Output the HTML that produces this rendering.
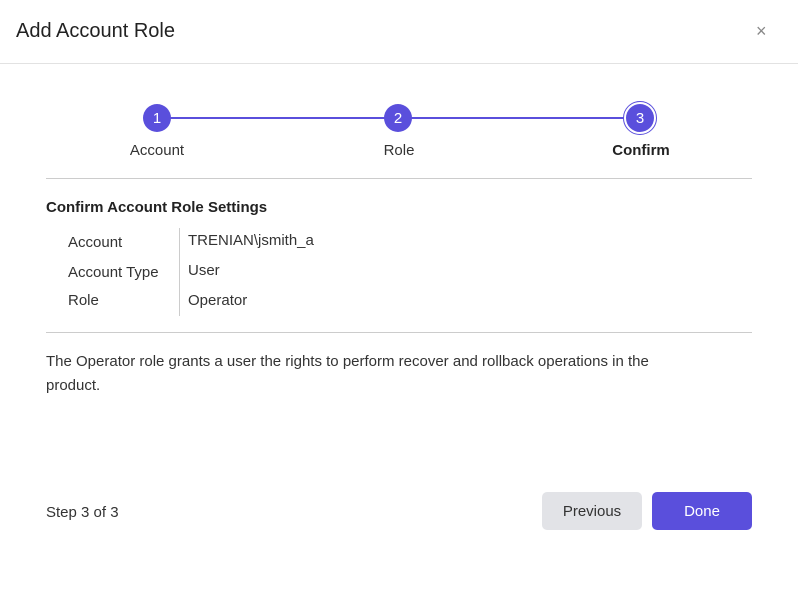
<!DOCTYPE html>
<html><head><style>
body{margin:0;width:798px;height:598px;background:#fff;font-family:"Liberation Sans",sans-serif;color:#222;position:relative;overflow:hidden}
.a{position:absolute}
.c{position:absolute;width:28px;height:28px;border-radius:50%;background:#5a4fdc;color:#fff;font-size:15px;display:flex;align-items:center;justify-content:center}
.lbl{position:absolute;font-size:15px;color:#333;transform:translateX(-50%);white-space:nowrap}
.t{position:absolute;font-size:15px;color:#333}
.b{position:absolute;top:492px;width:100px;height:38px;border-radius:5px;font-size:15px;display:flex;align-items:center;justify-content:center}
</style></head><body>
<div class="a" style="left:16px;top:20px;font-size:20px;color:#222">Add Account Role</div>
<div class="a" style="left:756px;top:21px;font-size:18px;color:#888">×</div>
<div class="a" style="left:0;top:63px;width:798px;height:1px;background:#e2e2e2"></div>
<div class="a" style="left:157px;top:117px;width:484px;height:2px;background:#5a4fdc"></div>
<div class="c" style="left:143px;top:104px">1</div>
<div class="c" style="left:384px;top:104px">2</div>
<div class="a" style="left:623px;top:101px;width:34px;height:34px;border-radius:50%;border:1.5px solid #5a4fdc;box-sizing:border-box;background:#fff"></div>
<div class="c" style="left:626px;top:104px">3</div>
<div class="lbl" style="left:157px;top:142px">Account</div>
<div class="lbl" style="left:399px;top:142px">Role</div>
<div class="lbl" style="left:641px;top:142px;font-weight:bold;color:#222">Confirm</div>
<div class="a" style="left:46px;top:178px;width:706px;height:1px;background:#ccc"></div>
<div class="t" style="left:46px;top:199px;font-weight:bold;color:#222">Confirm Account Role Settings</div>
<div class="a" style="left:179px;top:228px;width:1px;height:88px;background:#ccc"></div>
<div class="t" style="left:68px;top:234px">Account</div>
<div class="t" style="left:68px;top:264px">Account Type</div>
<div class="t" style="left:68px;top:292px">Role</div>
<div class="t" style="left:188px;top:232px">TRENIAN\jsmith_a</div>
<div class="t" style="left:188px;top:262px">User</div>
<div class="t" style="left:188px;top:292px">Operator</div>
<div class="a" style="left:46px;top:332px;width:706px;height:1px;background:#ccc"></div>
<div class="t" style="left:46px;top:350px;width:650px;line-height:24px">The Operator role grants a user the rights to perform recover and rollback operations in the product.</div>
<div class="t" style="left:46px;top:504px">Step 3 of 3</div>
<div class="b" style="left:542px;background:#e2e3e7;color:#333">Previous</div>
<div class="b" style="left:652px;background:#5a4fdc;color:#fff">Done</div>
</body></html>
